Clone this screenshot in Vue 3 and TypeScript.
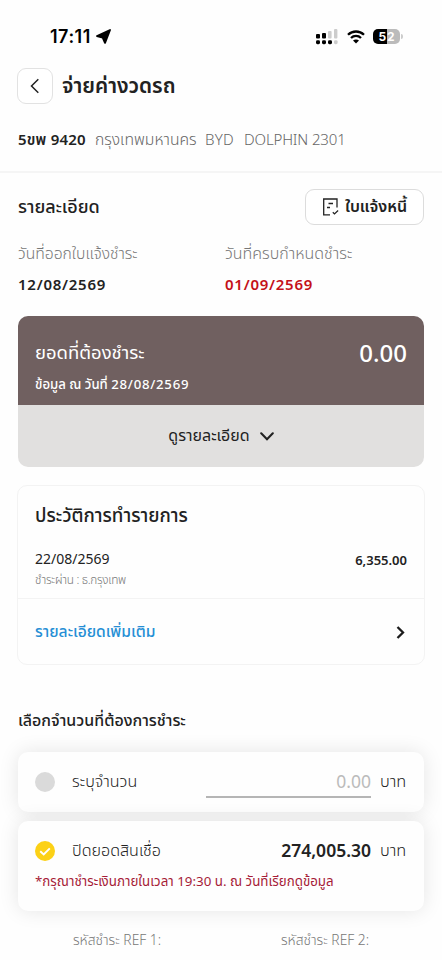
<script setup lang="ts">
import { ref } from 'vue'

interface Vehicle {
  plate: string
  province: string
  brand: string
  model: string
}

const vehicle: Vehicle = {
  plate: '5ขพ 9420',
  province: 'กรุงเทพมหานคร',
  brand: 'BYD',
  model: 'DOLPHIN 2301',
}

const selected = ref<'custom' | 'full'>('full')
</script>

<template>
  <main class="screen">
    <div class="status">
      <span class="clock">17:11</span>
      <svg class="loc" width="15" height="15" viewBox="0 0 15 15"><path d="M14 1 9 13.800 6.700 8.700 1 7Z" fill="#000" stroke="#000" stroke-width="1.900" stroke-linejoin="round" /></svg>
      <div class="status-right">
        <svg width="22" height="16" viewBox="0 0 22 16">
          <rect x="0" y="5" width="4" height="4.4" rx="1" />
          <rect x="6" y="4" width="4" height="5.4" rx="1" />
          <rect x="12" y="2" width="3.6" height="7.4" rx="1" fill="#ccc" />
          <rect x="18" y="0" width="3.4" height="9.4" rx="1" fill="#ccc" />
          <rect x="0" y="11.2" width="4" height="4" rx="1.4" />
          <rect x="6" y="11.2" width="4" height="4" rx="1.4" />
          <rect x="12" y="11.2" width="4" height="4" rx="1.4" />
          <rect x="18" y="11.2" width="3.6" height="4" rx="1.4" fill="#ccc" />
        </svg>
        <svg class="wifi" width="18" height="14" viewBox="0 0 18 14">
          <path d="M1 4.800C5.500.4 12.500.4 17 4.800M4 8C6.800 5.200 11.200 5.200 14 8" fill="none" stroke="#000" stroke-width="2.300" />
          <path d="M9 13.500 6 10.500C7.600 9 10.400 9 12 10.500Z" />
        </svg>
        <div class="battery"><span>5</span><span>2</span></div>
        <i class="nub"></i>
      </div>
    </div>

    <header class="head">
      <button class="back" type="button" aria-label="ย้อนกลับ">
        <svg width="10" height="16" viewBox="0 0 10 16"><path d="M8.300 1.300 1.500 8l6.800 6.700" fill="none" stroke="#222" stroke-width="1.500" /></svg>
      </button>
      <h1 class="t title">จ่ายค่างวดรถ</h1>
    </header>

    <div class="vehicle">
      <b class="t plate">{{ vehicle.plate }}</b>
      <span class="t province">{{ vehicle.province }}</span>
      <span class="t brand">{{ vehicle.brand }}</span>
      <span class="t model">{{ vehicle.model }}</span>
    </div>

    <section class="details">
      <div class="details-head">
        <h2 class="t h-detail">รายละเอียด</h2>
        <button class="invoice" type="button">
          <svg width="18" height="18" viewBox="0 0 18 18" fill="none" stroke="#222" stroke-width="1.300">
            <path d="M15 9.500V1H1.700V16.800H8M6.500 5.500H11M5 9.500H8M10.800 14.200l1.700 1.700 3.600-3.300" />
          </svg>
          <span class="t inv-text">ใบแจ้งหนี้</span>
        </button>
      </div>
      <div class="dates">
        <div><p class="t lbl l1">วันที่ออกใบแจ้งชำระ</p><p class="t date">12/08/2569</p></div>
        <div><p class="t lbl l2">วันที่ครบกำหนดชำระ</p><p class="t date d2">01/09/2569</p></div>
      </div>
    </section>

    <section class="due">
      <div class="due-top">
        <div>
          <p class="t due-title">ยอดที่ต้องชำระ</p>
          <p class="t due-date">ข้อมูล ณ วันที่ <span class="digits">28/08/2569</span></p>
        </div>
        <span class="t due-amount">0.00</span>
      </div>
      <div class="due-more">
        <span class="t more-text">ดูรายละเอียด</span>
        <svg width="14" height="9" viewBox="0 0 14 9"><path d="M1.200 1.300 7 7.200l5.800-5.900" fill="none" stroke="#222" stroke-width="2.100" stroke-linecap="round" /></svg>
      </div>
    </section>

    <section class="history">
      <div class="history-body">
        <h2 class="t h-history">ประวัติการทำรายการ</h2>
        <div class="tx"><span class="t tx-date">22/08/2569</span><span class="t tx-amount">6,355.00</span></div>
        <p class="t via">ชำระผ่าน : ธ.กรุงเทพ</p>
      </div>
      <div class="history-link">
        <span class="t link">รายละเอียดเพิ่มเติม</span>
        <svg width="9" height="13" viewBox="0 0 9 13"><path d="M1.500 1 7 6.500 1.500 12" fill="none" stroke="#1c1c1c" stroke-width="2.300" /></svg>
      </div>
    </section>

    <h2 class="t h-pay">เลือกจำนวนที่ต้องการชำระ</h2>

    <section class="options">
      <div class="option custom" @click="selected = 'custom'">
        <div class="row">
          <i class="radio" :class="{ on: selected === 'custom' }"></i>
          <span class="t opt-name">ระบุจำนวน</span>
          <span class="field"><span class="t ph">0.00</span></span>
          <span class="t baht">บาท</span>
        </div>
      </div>
      <div class="option full" @click="selected = 'full'">
        <div class="row">
          <i class="radio" :class="{ on: selected === 'full' }">
            <svg width="20" height="20" viewBox="0 0 20 20"><path d="M5.200 10.300 8.700 13.500 14.800 7.300" fill="none" stroke="#fff" stroke-width="1.900" /></svg>
          </i>
          <span class="t opt-name">ปิดยอดสินเชื่อ</span>
          <span class="t total">274,005.30</span>
          <span class="t baht">บาท</span>
        </div>
        <p class="t note">*กรุณาชำระเงินภายในเวลา 19:30 น. ณ วันที่เรียกดูข้อมูล</p>
      </div>
    </section>

    <footer class="refs">
      <span class="t ref">รหัสชำระ REF 1:</span>
      <span class="t ref">รหัสชำระ REF 2:</span>
    </footer>
  </main>
</template>

<style>
body { background: #fefefe; overflow: hidden; }
</style>

<style scoped>
* { box-sizing: border-box; margin: 0; }
.screen { width: 442px; height: 960px; overflow: hidden; background: #fefefe; color: #222; font-family: "Noto Sans", "Noto Sans Thai", "Open Sans", sans-serif; }
.t { white-space: nowrap; display: block; line-height: 24px; font-weight: 400; }
button { background: #fff; padding: 0; font-family: inherit; color: inherit; }
.status { height: 68px; padding: 5px 39px 0 50px; display: flex; align-items: center; }
.clock { font: 600 18px/24px Inter, sans-serif; color: #000; width: 42px; letter-spacing: 0.5px; }
.loc { margin-left: 4px; }
.status-right { margin-left: auto; display: flex; align-items: center; }
.wifi { margin-left: 9px; }
.battery { margin-left: 8px; width: 27px; height: 15px; border-radius: 5px; background: linear-gradient(90deg, #000 53%, #bbb 53%); color: #fff; font: 700 12px/15px Inter, sans-serif; display: flex; justify-content: center; gap: 1px; }
.nub { width: 2px; height: 5px; background: #ccc; border-radius: 0 2px 2px 0; margin-left: 1px; }
.head { height: 36px; display: flex; align-items: center; padding-left: 17px; }
.back { width: 36px; height: 36px; border: 1.500px solid #e2e2e2; border-radius: 9px; display: grid; place-items: center; }
.title { margin-left: 9px; font-size: 20.800px; font-weight: 600; padding-bottom: 2px; }
.vehicle { height: 69px; padding: 3px 0 0 18px; display: flex; align-items: center; border-bottom: 2px solid #f5f5f5; color: #666; font-size: 15px; }
.vehicle .t { font-weight: 300; }
.vehicle .plate { color: #222; font-weight: 600; width: 77px; letter-spacing: 0.2px; }
.province { width: 110px; font-size: 15.700px; }
.brand { width: 39px; letter-spacing: 0.3px; }
.model { letter-spacing: -0.15px; }
.details { height: 143px; padding: 16px 18px 0; }
.details-head { display: flex; justify-content: space-between; height: 36px; align-items: center; }
.h-detail { font-size: 18px; font-weight: 500; padding-bottom: 2px; }
.invoice { width: 119px; height: 36px; border: 1px solid #dcdcdc; border-radius: 9px; display: flex; align-items: center; justify-content: center; gap: 5px; }
.inv-text { font-size: 16px; font-weight: 600; padding-bottom: 2px; }
.dates { display: grid; grid-template-columns: 207px 1fr; padding-top: 16px; }
.lbl { font-size: 16px; font-weight: 300; color: #777; }
.l1 { font-size: 15.700px; }
.date { font-size: 15px; font-weight: 600; margin-top: 7px; letter-spacing: 0.75px; }
.d2 { color: #c41018; }
.due { margin: 0 18px; border-radius: 10px; overflow: hidden; }
.due-top { background: #706060; color: #fff; height: 89px; padding: 24px 17px 0 17px; display: flex; justify-content: space-between; }
.due-title { font-size: 18.500px; }
.due-date { font-size: 13.200px; margin-top: 8px; font-weight: 500; }
.digits { letter-spacing: 0.75px; }
.due-amount { font-size: 24px; font-weight: 500; line-height: 25px; }
.due-more { background: #e1e0df; height: 62px; display: flex; align-items: center; justify-content: center; gap: 10px; }
.more-text { font-size: 16px; padding-bottom: 2px; }
.history { margin: 18px 17px 0; height: 180px; border: 1.500px solid #f3f3f3; border-radius: 10px; }
.history-body { height: 113px; border-bottom: 1.500px solid #f3f3f3; padding: 17px 17px 0; }
.h-history { font-size: 18.700px; font-weight: 500; }
.tx { margin-top: 20px; display: flex; justify-content: space-between; }
.tx-date { font-size: 14px; }
.tx-amount { font-size: 13px; font-weight: 600; padding-top: 1px; margin-bottom: -1px; }
.via { font-size: 11.800px; font-weight: 300; color: #777; line-height: 16px; letter-spacing: -0.3px; }
.history-link { height: 66px; display: flex; align-items: center; justify-content: space-between; padding: 0 19px 0 17px; }
.link { font-size: 15.600px; color: #268fd5; font-weight: 500; padding-bottom: 2px; }
.h-pay { margin: 43px 0 0 18px; font-size: 16px; font-weight: 500; }
.options { margin: 20px 18px 0; display: grid; gap: 9px; }
.option { background: #fefefe; border-radius: 10px; box-shadow: 0 0 20px rgba(0, 0, 0, .1); padding: 0 18px 0 17px; }
.custom { height: 60px; padding-top: 18px; }
.full { height: 90px; padding-top: 18px; }
.row { display: flex; height: 24px; align-items: center; }
.row .t { padding-bottom: 3px; }
.row .ph { padding-bottom: 1px; }
.radio { width: 20px; height: 20px; border-radius: 50%; background: #dadada; display: block; flex: none; }
.radio.on { background: #fcd116; }
.opt-name { margin-left: 17px; font-size: 16.100px; font-weight: 300; color: #222; }
.field { margin-left: auto; width: 165px; height: 31px; border-bottom: 2px solid #b5b5b5; display: flex; align-items: center; justify-content: flex-end; }
.ph { font-size: 17.500px; color: #bbb; }
.baht { width: 26px; margin-left: 9px; font-size: 16.300px; font-weight: 300; color: #222; }
.total { margin-left: auto; font-size: 17.500px; font-weight: 600; }
.note { margin-top: 6px; font-size: 13.350px; color: #a61c38; }
.refs { display: grid; grid-template-columns: 208px 1fr; padding: 17px 0 0 73px; }
.ref { font-size: 13.800px; font-weight: 300; color: #777; }
</style>
